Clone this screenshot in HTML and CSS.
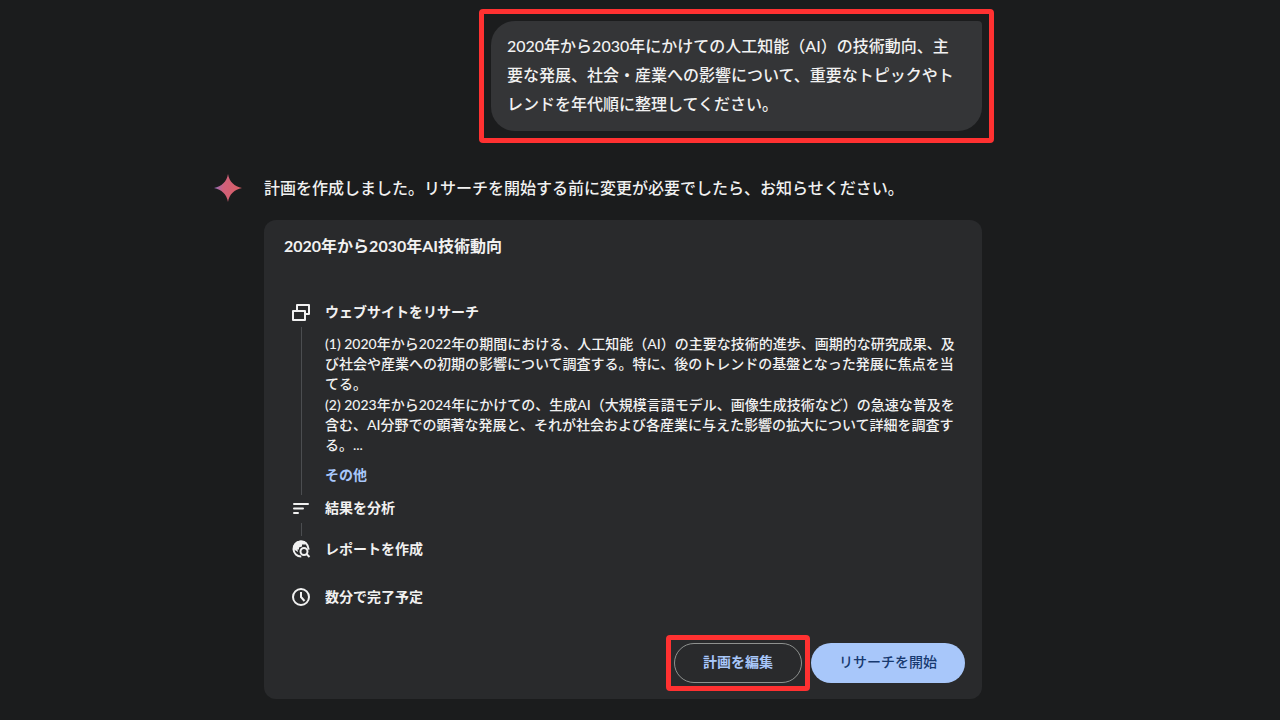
FILE: index.html
```html
<!DOCTYPE html>
<html lang="ja">
<head>
    <meta charset="UTF-8">
    <meta name="viewport" content="width=device-width, initial-scale=1.0">
    <title>2020年から2030年AI技術動向</title>
    <link rel="stylesheet" href="styles.css">
</head>
<body>
    <main class="chat">
        <!-- User message -->
        <div class="prompt highlight">
            <p class="bubble">2020年から2030年にかけての人工知能（AI）の技術動向、主<br>要な発展、社会・産業への影響について、重要なトピックやト<br>レンドを年代順に整理してください。</p>
        </div>

        <!-- Reply -->
        <div class="reply">
            <svg class="spark" viewBox="0 0 28 28" aria-hidden="true">
                <defs>
                    <linearGradient id="sparkFill" x1="0" y1="0.4" x2="1" y2="0.6">
                        <stop offset="0" stop-color="#8a6fc0"/>
                        <stop offset="0.35" stop-color="#d0607a"/>
                        <stop offset="1" stop-color="#d95f63"/>
                    </linearGradient>
                </defs>
                <path fill="url(#sparkFill)" d="M14 0C15.2 7.5 20.5 12.8 28 14C20.5 15.2 15.2 20.5 14 28C12.8 20.5 7.5 15.2 0 14C7.5 12.8 12.8 7.5 14 0Z"/>
            </svg>

            <div class="reply-body">
                <p class="reply-text">計画を作成しました。リサーチを開始する前に変更が必要でしたら、お知らせください。</p>

                <section class="card">
                    <h2 class="card-title">2020年から2030年AI技術動向</h2>

                    <ul class="steps">
                        <li class="step">
                            <div class="rail">
                                <svg class="icon" viewBox="0 0 24 24" aria-hidden="true">
                                    <path fill="none" stroke="#f1f1f1" stroke-width="2" stroke-linejoin="round" d="M8 11V5H20V14H16M4 11H16V20H4Z"/>
                                </svg>
                            </div>
                            <div class="step-main">
                                <h3 class="step-title">ウェブサイトをリサーチ</h3>
                                <div class="details">
                                    <p>(1) 2020年から2022年の期間における、人工知能（AI）の主要な技術的進歩、画期的な研究成果、及<br>び社会や産業への初期の影響について調査する。特に、後のトレンドの基盤となった発展に焦点を当<br>てる。</p>
                                    <p>(2) 2023年から2024年にかけての、生成AI（大規模言語モデル、画像生成技術など）の急速な普及を<br>含む、AI分野での顕著な発展と、それが社会および各産業に与えた影響の拡大について詳細を調査す<br>る。...</p>
                                </div>
                                <a class="more" href="#">その他</a>
                            </div>
                        </li>
                        <li class="step step-short">
                            <div class="rail">
                                <svg class="icon" viewBox="0 0 24 24" aria-hidden="true">
                                    <path fill="none" stroke="#f1f1f1" stroke-width="2" stroke-linecap="round" d="M5 8H19M5 12.500H14M5 17H9"/>
                                </svg>
                            </div>
                            <h3 class="step-title">結果を分析</h3>
                        </li>
                        <li class="step step-last">
                            <div class="rail">
                                <svg class="icon" viewBox="0 0 24 24" aria-hidden="true">
                                    <circle cx="12" cy="12" r="7.500" fill="none" stroke="#f1f1f1" stroke-width="2" stroke-dasharray="36 12" transform="rotate(88 12 12)"/>
                                    <path fill="#f1f1f1" d="M4 12C4 7 7 3.500 12 3.500C14.500 3.500 16.500 4.300 18 6L16 7.500H13V9.500L10 10.500V12.500H8.500L9 15Z"/>
                                    <circle cx="15" cy="14.500" r="3.500" fill="#292a2c" stroke="#f1f1f1" stroke-width="2"/>
                                    <path stroke="#f1f1f1" stroke-width="2" d="M17 16.500L20.500 20"/>
                                </svg>
                            </div>
                            <h3 class="step-title">レポートを作成</h3>
                        </li>
                        <li class="step step-last">
                            <div class="rail">
                                <svg class="icon" viewBox="0 0 24 24" aria-hidden="true">
                                    <circle cx="12" cy="12" r="8" fill="none" stroke="#f1f1f1" stroke-width="2"/>
                                    <path fill="none" stroke="#f1f1f1" stroke-width="2" d="M12 7V12L15.500 16"/>
                                </svg>
                            </div>
                            <h3 class="step-title">数分で完了予定</h3>
                        </li>
                    </ul>

                    <div class="actions">
                        <div class="highlight highlight-button">
                            <button class="button button-outline" type="button">計画を編集</button>
                        </div>
                        <button class="button button-filled" type="button">リサーチを開始</button>
                    </div>
                </section>
            </div>
        </div>
    </main>
</body>
</html>
```
FILE: styles.css
```css
* {
    box-sizing: border-box;
}

body {
    margin: 0;
    background-color: #1b1c1d;
    color: #f1f1f1;
    font-family: Lato, "Noto Sans CJK JP", sans-serif;
    font-size: 16px;
    font-weight: 500;
}

h2, h3, p, ul {
    margin: 0;
    padding: 0;
}

.chat {
    margin: 0 298px 0 214px;
    padding: 21px 0;
    display: flex;
    flex-direction: column;
    gap: 43px;
}

/* User message */
.prompt {
    align-self: flex-end;
    margin-left: 48px;
}

.bubble {
    padding: 10px 18px 13px 16px;
    min-width: 491px;
    background-color: #343537;
    border-radius: 24px 4px 24px 24px;
    line-height: 29px;
}

/* Red frame around an element */
.highlight {
    position: relative;
}

.highlight::after {
    content: "";
    position: absolute;
    inset: -12px;
    border: 5px solid #ff3131;
    border-radius: 4px;
    pointer-events: none;
}

.highlight-button::after {
    inset: -8px;
}

/* Reply */
.reply {
    display: grid;
    grid-template-columns: 28px 1fr;
    gap: 22px;
}

.spark {
    width: 28px;
    height: 28px;
}

.reply-text {
    line-height: 28px;
}

.card {
    margin-top: 18px;
    padding: 14px 17px 16px 20px;
    background-color: #292a2c;
    border-radius: 12px;
}

.card-title {
    font-size: 16px;
    font-weight: 700;
    line-height: 24px;
}

/* Research steps */
.steps {
    margin: 42px 0 34px;
    padding-left: 5px;
    list-style: none;
}

.step {
    display: grid;
    grid-template-columns: 24px 1fr;
    gap: 12px;
}

.rail {
    display: flex;
    flex-direction: column;
    align-items: center;
    gap: 3px;
}

.rail::after {
    content: "";
    flex: 1;
    width: 1px;
    margin-bottom: 1px;
    background-color: #4b4d50;
}

.icon {
    width: 24px;
    height: 24px;
}

.step-main {
    padding-bottom: 11px;
}

.step-title {
    font-size: 14px;
    font-weight: 700;
    line-height: 24px;
}

.step-short {
    min-height: 41px;
}

.step-last + .step-last {
    margin-top: 24px;
}

.step-last .rail {
    height: 24px;
}

.step-last .rail::after {
    display: none;
}

.details {
    display: grid;
    gap: 1px;
    margin: 10px 0;
    font-size: 14px;
    line-height: 20px;
}

.more {
    display: block;
    color: #a8c7fa;
    font-size: 14px;
    font-weight: 700;
    line-height: 20px;
    text-decoration: none;
}

/* Buttons */
.actions {
    display: flex;
    justify-content: flex-end;
    gap: 9px;
}

.button {
    height: 40px;
    padding: 0 28px 2px;
    border: none;
    border-radius: 20px;
    font: inherit;
    font-size: 14px;
    font-weight: 700;
    line-height: 20px;
    cursor: pointer;
}

.button-outline {
    border: 1px solid #8e918f;
    background: none;
    color: #a8c7fa;
}

.button-filled {
    background-color: #a8c7fa;
    color: #17396f;
    font-weight: 500;
}
```
